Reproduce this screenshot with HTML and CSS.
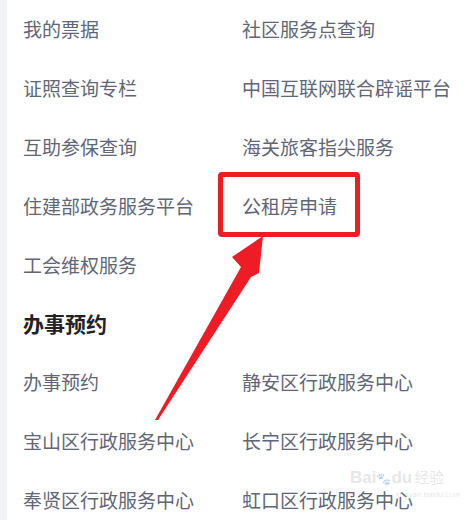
FILE: index.html
```html
<!DOCTYPE html>
<html>
  <head>
    <title>服务</title>
    <link rel="stylesheet" href="styles.css">
  </head>
  <body>
    <div class="page">
      <div class="side-strip"></div>
      <div class="content">
        <div class="link-grid">
          <div class="link-item">我的票据</div>
          <div class="link-item">社区服务点查询</div>
          <div class="link-item">证照查询专栏</div>
          <div class="link-item">中国互联网联合辟谣平台</div>
          <div class="link-item">互助参保查询</div>
          <div class="link-item">海关旅客指尖服务</div>
          <div class="link-item">住建部政务服务平台</div>
          <div class="link-item">公租房申请</div>
          <div class="link-item">工会维权服务</div>
          <div class="link-item"></div>
        </div>
        <div class="section-title">办事预约</div>
        <div class="link-grid">
          <div class="link-item">办事预约</div>
          <div class="link-item">静安区行政服务中心</div>
          <div class="link-item">宝山区行政服务中心</div>
          <div class="link-item">长宁区行政服务中心</div>
          <div class="link-item">奉贤区行政服务中心</div>
          <div class="link-item">虹口区行政服务中心</div>
        </div>
      </div>
    </div>

    <!-- annotation on top of the screenshot -->
    <div class="mark-box"></div>
    <svg class="mark-arrow" width="466" height="520" viewBox="0 0 466 520">
      <polygon fill="#ee1c24"
        points="155,420 241,267 232,257 263,236 259,273 251,277 158,420" />
    </svg>

    <div class="watermark">
      <div class="wm-logo">Bai<span class="wm-paw">&#x1F43E;</span>du<span class="wm-cn">经验</span></div>
      <div class="wm-url">jingyan.baidu.com</div>
    </div>
  </body>
</html>
```

FILE: styles.css
```css
body {
  margin: 0;
  background-color: #ffffff;
  font-family: "Noto Sans CJK SC", "Noto Sans", sans-serif;
  overflow: hidden;
}

.page {
  display: flex;
  width: 466px;
  height: 520px;
}

.side-strip {
  width: 7px;
  background-color: #f2f3f5;
}

.content {
  flex: 1;
  padding: 0 0 0 16px;
  margin-top: -1px;
}

.link-grid {
  display: grid;
  grid-template-columns: 219px 1fr;
  grid-auto-rows: 59px;
  align-items: center;
}

.link-item {
  font-size: 19px;
  color: #5f6676;
  white-space: nowrap;
  line-height: 59px;
}

.section-title {
  height: 58px;
  line-height: 58px;
  font-size: 21px;
  font-weight: bold;
  color: #222222;
}

/* red annotation */
.mark-box {
  position: absolute;
  left: 218px;
  top: 172px;
  width: 132px;
  height: 55px;
  border: 5px solid #ee1c24;
  border-radius: 4px;
}

.mark-arrow {
  position: absolute;
  left: 0;
  top: 0;
}

.watermark {
  position: absolute;
  left: 350px;
  top: 466px;
  color: rgba(170, 170, 170, 0.3);
  white-space: nowrap;
}

.wm-logo {
  font-family: "Liberation Sans", sans-serif;
  font-size: 17px;
  font-weight: bold;
  line-height: 22px;
}

.wm-paw {
  font-size: 12px;
}

.wm-cn {
  font-family: "Noto Sans CJK SC", sans-serif;
  font-weight: normal;
  font-size: 15px;
  margin-left: 2px;
}

.wm-url {
  font-family: "Liberation Sans", sans-serif;
  font-size: 8px;
  line-height: 10px;
  margin-left: 46px;
}
```
